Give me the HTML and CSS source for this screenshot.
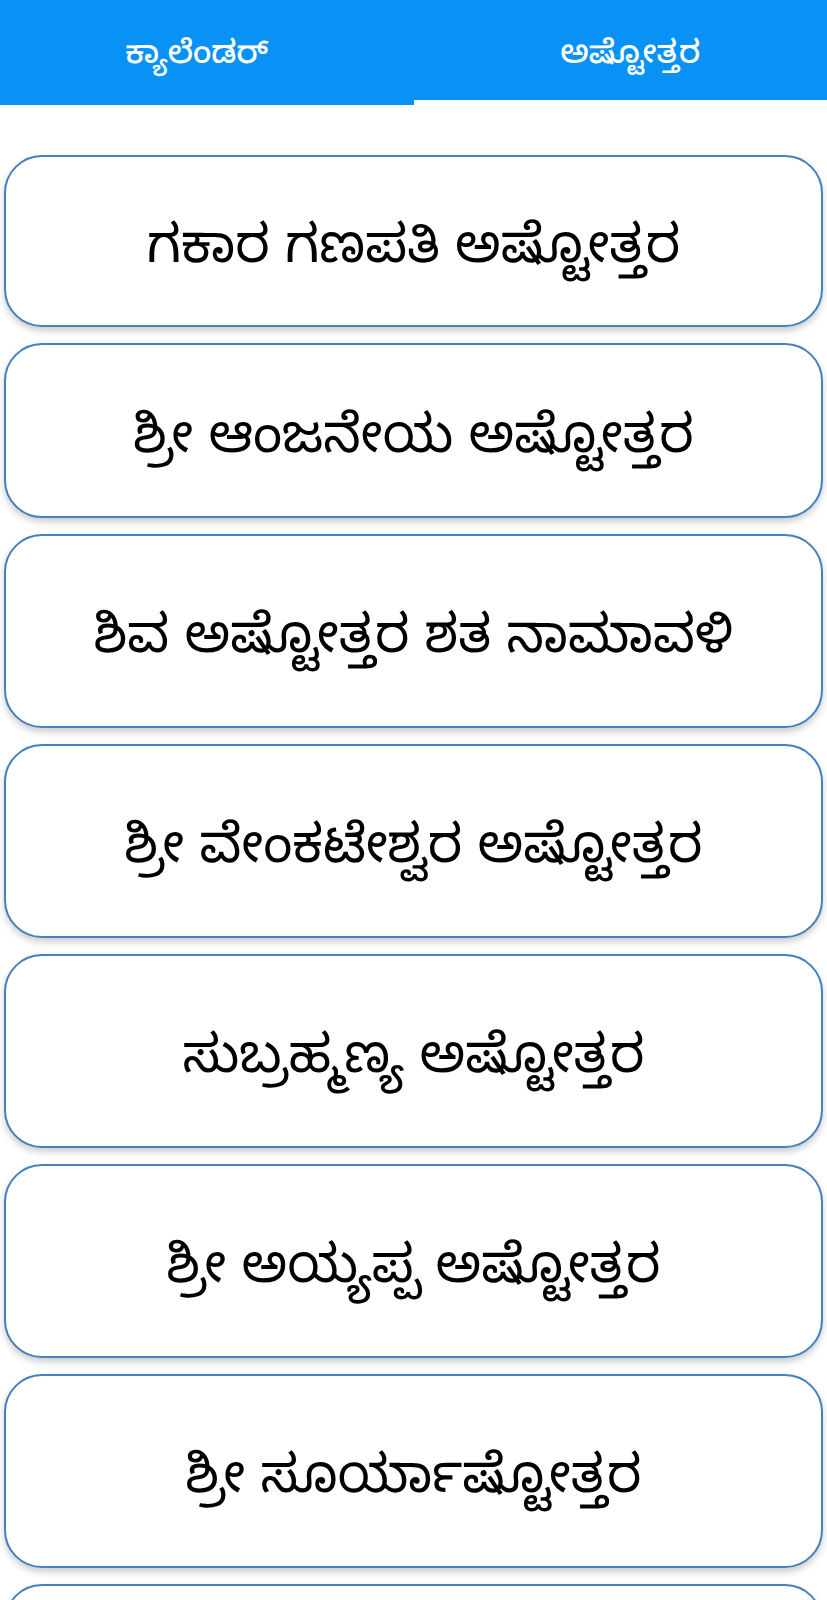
FILE: index.html
```html
<!DOCTYPE html>
<html lang="kn">
<head>
<meta charset="utf-8">
<link rel="stylesheet" href="styles.css">
</head>
<body>
<header class="appbar">
  <div class="tabs">
    <div class="tab tab-left">ಕ್ಯಾಲೆಂಡರ್</div>
    <div class="tab tab-right">ಅಷ್ಟೋತ್ತರ</div>
  </div>
  <div class="indicator-row">
    <div class="indicator"></div>
  </div>
</header>
<main class="list">
  <div class="card card-short">ಗಕಾರ ಗಣಪತಿ ಅಷ್ಟೋತ್ತರ</div>
  <div class="card card-short2">ಶ್ರೀ ಆಂಜನೇಯ ಅಷ್ಟೋತ್ತರ</div>
  <div class="card">ಶಿವ ಅಷ್ಟೋತ್ತರ ಶತ ನಾಮಾವಳಿ</div>
  <div class="card">ಶ್ರೀ ವೇಂಕಟೇಶ್ವರ ಅಷ್ಟೋತ್ತರ</div>
  <div class="card">ಸುಬ್ರಹ್ಮಣ್ಯ ಅಷ್ಟೋತ್ತರ</div>
  <div class="card">ಶ್ರೀ ಅಯ್ಯಪ್ಪ ಅಷ್ಟೋತ್ತರ</div>
  <div class="card">ಶ್ರೀ ಸೂರ್ಯಾಷ್ಟೋತ್ತರ</div>
  <div class="card"></div>
</main>
</body>
</html>
```
FILE: styles.css
```css
html, body {
  margin: 0;
  padding: 0;
  background: #ffffff;
  font-family: "Noto Sans Kannada", "Lohit Kannada", "Noto Sans", "DejaVu Sans", sans-serif;
  overflow: hidden;
}
.appbar {
  display: flex;
  flex-direction: column;
}
.tabs {
  display: flex;
  height: 100px;
  background: #0892f5;
}
.tab {
  flex: 1;
  display: flex;
  align-items: center;
  justify-content: center;
  color: #ffffff;
  font-size: 32px;
  font-weight: 500;
  padding-top: 17px;
}
.tab-left {
  padding-right: 20px;
}
.tab-right {
  padding-left: 20px;
}
.indicator-row {
  display: flex;
  height: 5px;
}
.indicator {
  width: 50%;
  background: #0892f5;
}
.list {
  display: flex;
  flex-direction: column;
  gap: 16px;
  padding: 50px 4px 0 4px;
}
.card {
  box-sizing: border-box;
  height: 194px;
  flex: none;
  display: flex;
  align-items: center;
  justify-content: center;
  padding-top: 28px;
  border: 2px solid #4580bf;
  border-radius: 38px;
  background: #ffffff;
  box-shadow: 0 4px 7px rgba(0, 0, 0, 0.2);
  color: #000000;
  font-size: 53px;
  white-space: nowrap;
}
.card-short {
  height: 172px;
}
.card-short2 {
  height: 175px;
}
```
